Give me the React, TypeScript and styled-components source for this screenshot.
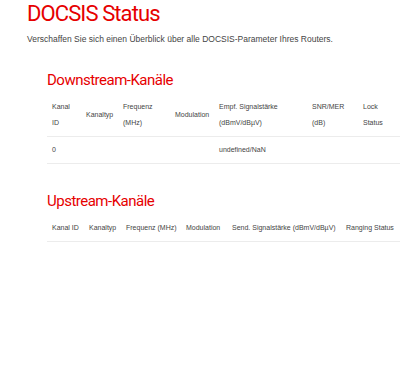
import styled, { createGlobalStyle } from "styled-components";

const GlobalStyle = createGlobalStyle`
  body {
    margin: 0;
    background: #ffffff;
    font-family: "Liberation Sans", Arial, sans-serif;
  }
  *, *::before, *::after {
    box-sizing: border-box;
  }
`;

const RED = "#e60000";
const HEADING_FONT = `Roboto, "Liberation Sans", sans-serif`;

const Page = styled.main`
  padding: 0 0 0 27px;
`;

const Title = styled.h1`
  margin: 0;
  font-family: ${HEADING_FONT};
  font-weight: 400;
  font-size: 22px;
  line-height: 28px;
  color: ${RED};
  letter-spacing: -0.9px;
`;

const Intro = styled.p`
  margin: 5px 0 0;
  font-size: 8.5px;
  line-height: 12px;
  color: #444;
`;

const Section = styled.section<{ $top: number }>`
  margin: ${(p) => p.$top}px 0 0 20px;
`;

const SectionTitle = styled.h2`
  margin: 0 0 4px;
  font-family: ${HEADING_FONT};
  font-weight: 400;
  font-size: 15px;
  line-height: 20px;
  color: ${RED};
  letter-spacing: -0.5px;
`;

const Table = styled.table`
  width: 353px;
  table-layout: fixed;
  border-collapse: collapse;
  font-size: 7px;
  color: #444;
`;

const HeadCell = styled.th<{ $w: number }>`
  width: ${(p) => p.$w}px;
  padding: 5px 4px 5px 5px;
  font-weight: 400;
  text-align: left;
  vertical-align: middle;
  line-height: 16px;
  border-bottom: 1px solid #ececec;
`;

const Cell = styled.td`
  padding: 5px 4px 5px 5px;
  line-height: 16px;
  border-bottom: 1px solid #ececec;
`;

const Line = styled.span`
  display: block;
  white-space: nowrap;
`;

type Col = { lines: string[]; w: number };

const downCols: Col[] = [
  { lines: ["Kanal", "ID"], w: 34 },
  { lines: ["Kanaltyp"], w: 37 },
  { lines: ["Frequenz", "(MHz)"], w: 52 },
  { lines: ["Modulation"], w: 44 },
  { lines: ["Empf. Signalstärke", "(dBmV/dBµV)"], w: 93 },
  { lines: ["SNR/MER", "(dB)"], w: 51 },
  { lines: ["Lock", "Status"], w: 42 },
];

const upCols: Col[] = [
  { lines: ["Kanal ID"], w: 37 },
  { lines: ["Kanaltyp"], w: 37 },
  { lines: ["Frequenz (MHz)"], w: 60 },
  { lines: ["Modulation"], w: 46 },
  { lines: ["Send. Signalstärke (dBmV/dBµV)"], w: 114 },
  { lines: ["Ranging Status"], w: 59 },
];

const downRows = [["0", "", "", "", "undefined/NaN", "", ""]];

function ChannelTable({ cols, rows }: { cols: Col[]; rows: string[][] }) {
  return (
    <Table>
      <thead>
        <tr>
          {cols.map((c, i) => (
            <HeadCell key={i} $w={c.w}>
              {c.lines.map((l, j) => (
                <Line key={j}>{l}</Line>
              ))}
            </HeadCell>
          ))}
        </tr>
      </thead>
      <tbody>
        {rows.map((r, i) => (
          <tr key={i}>
            {r.map((v, j) => (
              <Cell key={j}>{v}</Cell>
            ))}
          </tr>
        ))}
      </tbody>
    </Table>
  );
}

export default function App() {
  return (
    <>
      <GlobalStyle />
      <Page>
        <Title>DOCSIS Status</Title>
        <Intro>Verschaffen Sie sich einen Überblick über alle DOCSIS-Parameter Ihres Routers.</Intro>
        <Section $top={25}>
          <SectionTitle>Downstream-Kanäle</SectionTitle>
          <ChannelTable cols={downCols} rows={downRows} />
        </Section>
        <Section $top={27}>
          <SectionTitle>Upstream-Kanäle</SectionTitle>
          <ChannelTable cols={upCols} rows={[]} />
        </Section>
      </Page>
    </>
  );
}
